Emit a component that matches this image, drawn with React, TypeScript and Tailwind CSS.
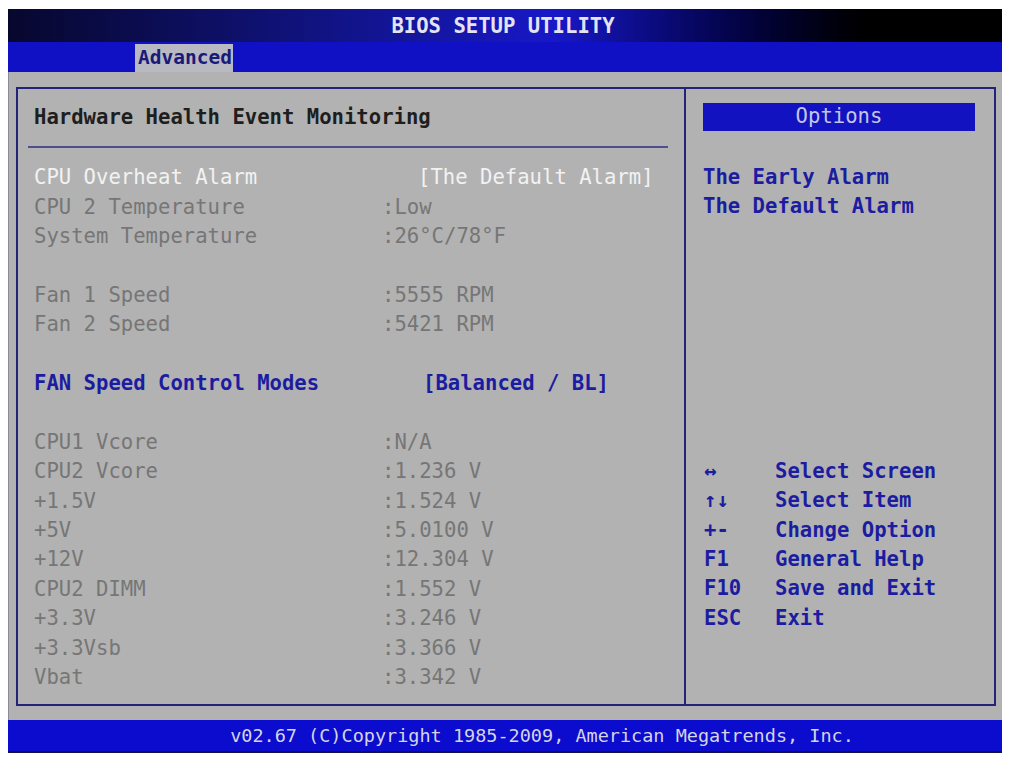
import React from 'react';

type Row = { label?: string; value?: string; kind?: 'white' | 'blue' | 'gray'; shift?: number };

const rows: Row[] = [
  { label: 'CPU Overheat Alarm', value: '[The Default Alarm]', kind: 'white', shift: 36 },
  { label: 'CPU 2 Temperature', value: ':Low' },
  { label: 'System Temperature', value: ':26°C/78°F' },
  {},
  { label: 'Fan 1 Speed', value: ':5555 RPM' },
  { label: 'Fan 2 Speed', value: ':5421 RPM' },
  {},
  { label: 'FAN Speed Control Modes', value: '[Balanced / BL]', kind: 'blue', shift: 41 },
  {},
  { label: 'CPU1 Vcore', value: ':N/A' },
  { label: 'CPU2 Vcore', value: ':1.236 V' },
  { label: '+1.5V', value: ':1.524 V' },
  { label: '+5V', value: ':5.0100 V' },
  { label: '+12V', value: ':12.304 V' },
  { label: 'CPU2 DIMM', value: ':1.552 V' },
  { label: '+3.3V', value: ':3.246 V' },
  { label: '+3.3Vsb', value: ':3.366 V' },
  { label: 'Vbat', value: ':3.342 V' },
];

const keys = [
  ['↔', 'Select Screen'],
  ['↑↓', 'Select Item'],
  ['+-', 'Change Option'],
  ['F1', 'General Help'],
  ['F10', 'Save and Exit'],
  ['ESC', 'Exit'],
];

function SetupRow({ row }: { row: Row }) {
  if (!row.label) return <div className="h-[29.4px]" />;
  const color =
    row.kind === 'white' ? 'text-[#f2f2f2]' : row.kind === 'blue' ? 'text-[#1c1ca0] font-bold' : 'text-[#767676]';
  return (
    <div className={`flex h-[29.4px] items-center whitespace-pre ${color}`}>
      <span className="w-[348px] shrink-0">{row.label}</span>
      <span className={row.shift === 36 ? 'ml-[36px]' : row.shift === 41 ? 'ml-[41px]' : ''}>{row.value}</span>
    </div>
  );
}

export default function App() {
  return (
    <div
      className="w-[1009px] h-[759px] bg-white pt-[9px] pl-[8px] text-[20.6px] leading-[29.4px]"
      style={{ fontFamily: '"DejaVu Sans Mono", "Liberation Mono", monospace' }}
    >
      <div className="w-[994px] flex flex-col">
        {/* title */}
        <div className="h-[33px] flex items-center justify-center bg-gradient-to-r from-[#07072e] via-[#1818c8] via-55% to-[#000000] to-90%">
          <span className="font-bold text-[#e4e4f0] ml-[-4px] mt-[2px]">BIOS SETUP UTILITY</span>
        </div>
        {/* tabs */}
        <div className="h-[30px] bg-[#1010c4] pl-[127px] pt-[2px]">
          <div className="w-[98px] h-[28px] bg-[#b9b9c4] flex items-center pl-[3px] text-[19.5px] font-bold text-[#1a1a78]">
            Advanced
          </div>
        </div>
        {/* body */}
        <div className="h-[648px] bg-[#b2b2b2] pt-[15px] pl-[7px] border-l border-[#8a8a9a]">
          <div className="flex h-[619px]">
            <div className="w-[670px] border-2 border-[#23237a] pl-[16px] pt-[14px]">
              <div className="font-bold text-[#1e1e1e]">Hardware Health Event Monitoring</div>
              <div className="ml-[-6px] mt-[14px] w-[640px] h-[2px] bg-[#4e4e8e]" />
              <div className="mt-[15px]">
                {rows.map((r, i) => (
                  <SetupRow key={i} row={r} />
                ))}
              </div>
            </div>
            <div className="w-[310px] border-2 border-l-0 border-[#23237a] pl-[17px] pt-[14px]">
              <div className="w-[272px] h-[28px] bg-[#1212c0] flex items-center justify-center text-[#c4c4e6]">
                Options
              </div>
              <div className="mt-[32px] font-bold text-[#1c1ca0]">
                <div>The Early Alarm</div>
                <div>The Default Alarm</div>
              </div>
              <div className="mt-[235px] font-bold text-[#1c1ca0]">
                {keys.map(([k, d]) => (
                  <div key={k} className="flex h-[29.4px] items-center whitespace-pre">
                    <span className="w-[72px] shrink-0 pl-[1px]">{k}</span>
                    <span>{d}</span>
                  </div>
                ))}
              </div>
            </div>
          </div>
        </div>
        {/* footer */}
        <div className="h-[33px] bg-[#0c0cce] border-b-2 border-[#10104a] flex items-center justify-center pl-[74px] text-[18.5px] text-[#d4d4e4] whitespace-pre">
          v02.67 (C)Copyright 1985-2009, American Megatrends, Inc.
        </div>
      </div>
    </div>
  );
}
